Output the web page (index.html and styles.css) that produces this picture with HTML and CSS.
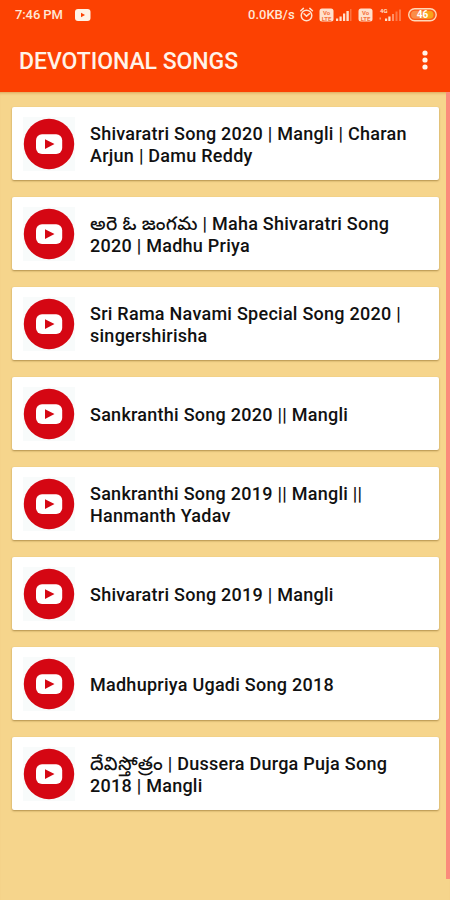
FILE: index.html
```html
<!DOCTYPE html>
<html lang="en">
<head>
    <meta charset="UTF-8">
    <meta name="viewport" content="width=device-width, initial-scale=1.0">
    <title>Devotional Songs</title>
    <link rel="stylesheet" href="styles.css">
</head>
<body>
    <svg class="defs" width="0" height="0">
        <symbol id="play" viewBox="0 0 52 54">
            <rect width="52" height="54" fill="#f8fbfb"/>
            <circle cx="26" cy="27" r="25.2" fill="#d50713"/>
            <rect x="13" y="17.3" width="26.2" height="19.7" rx="6" fill="#fff"/>
            <path d="M22 22.2v9.8l9.5-4.9z" fill="#d50713"/>
        </symbol>
    </svg>
    <header>
        <div class="status-bar">
            <span class="time">7:46 PM</span>
            <svg class="yt" width="16" height="12" viewBox="0 0 16 12">
                <rect width="15.5" height="12" rx="3" fill="#fff3e6"/>
                <path d="M6 3.8v4.4l4-2.2z" fill="#fc4102"/>
            </svg>
            <span class="speed">0.0KB/s</span>
            <svg class="status-icons" width="140" height="20" viewBox="0 0 140 20">
                <g fill="none" stroke="#ffe0cc" stroke-width="1.5" stroke-linecap="round">
                    <circle cx="6.5" cy="10.5" r="5.3"/>
                    <path d="M.8 5.8l2.6-2.4M12.4 5.8L9.8 3.4M4 8.7l2.5 2.5 3-2.5"/>
                </g>
                <g fill="#ffe0cc">
                    <rect x="19.5" y="3.5" width="14" height="13" rx="2.5"/>
                    <rect x="36" y="13.5" width="2.2" height="2.5"/>
                    <rect x="39.5" y="11.5" width="2.2" height="4.5"/>
                    <rect x="43" y="8.5" width="2.2" height="7.5"/>
                    <rect x="46.4" y="6" width="2.4" height="10"/>
                    <rect x="50" y="4" width="1.5" height="12" opacity=".3"/>
                    <rect x="58.5" y="3.5" width="14" height="13" rx="2.5"/>
                    <rect x="79.5" y="12.5" width="1.5" height="2" opacity=".5"/>
                    <rect x="85" y="13.5" width="2.2" height="2.5"/>
                    <rect x="88.3" y="11.5" width="2.2" height="4.5"/>
                    <rect x="92" y="9" width="2" height="7" opacity=".5"/>
                    <rect x="95.5" y="6.5" width="2" height="9.5" opacity=".35"/>
                    <rect x="99" y="4.5" width="2" height="11.5" opacity=".35"/>
                </g>
                <g class="volte">
                    <text x="26.5" y="9.5">Vo</text>
                    <text x="26.5" y="15.5">LTE</text>
                    <text x="65.5" y="9.5">Vo</text>
                    <text x="65.5" y="15.5">LTE</text>
                </g>
                <text class="net" x="80" y="8">4G</text>
                <rect x="108.7" y="3.7" width="27.5" height="12" rx="6" fill="#fc5a18" stroke="#ffd8b8" stroke-width="1.4"/>
                <path d="M111 9.7a4 4 0 0 1 4-4h8v8h-8a4 4 0 0 1-4-4z" fill="#f98d49"/>
                <path d="M123 5.7h6.5a4 4 0 0 1 0 8H123z" fill="#f9a31b"/>
                <text class="level" x="122.5" y="13.3">46</text>
            </svg>
        </div>
        <div class="toolbar">
            <h1>DEVOTIONAL SONGS</h1>
            <svg width="8" height="20" viewBox="0 0 8 20" fill="#fff3e9">
                <circle cx="4" cy="3" r="2.6"/>
                <circle cx="4" cy="10" r="2.6"/>
                <circle cx="4" cy="17" r="2.6"/>
            </svg>
        </div>
    </header>
    <main>
        <ul class="songs">
            <li class="song">
                <svg class="thumb"><use href="#play"/></svg>
                <p>Shivaratri Song 2020 | Mangli | Charan<br>Arjun | Damu Reddy</p>
            </li>
            <li class="song">
                <svg class="thumb"><use href="#play"/></svg>
                <p><span class="te" lang="te">అరె ఓ జంగమ</span> | Maha Shivaratri Song<br>2020 | Madhu Priya</p>
            </li>
            <li class="song">
                <svg class="thumb"><use href="#play"/></svg>
                <p>Sri Rama Navami Special Song 2020 |<br>singershirisha</p>
            </li>
            <li class="song">
                <svg class="thumb"><use href="#play"/></svg>
                <p>Sankranthi Song 2020 || Mangli</p>
            </li>
            <li class="song">
                <svg class="thumb"><use href="#play"/></svg>
                <p>Sankranthi Song 2019 || Mangli ||<br>Hanmanth Yadav</p>
            </li>
            <li class="song">
                <svg class="thumb"><use href="#play"/></svg>
                <p>Shivaratri Song 2019 | Mangli</p>
            </li>
            <li class="song">
                <svg class="thumb"><use href="#play"/></svg>
                <p>Madhupriya Ugadi Song 2018</p>
            </li>
            <li class="song">
                <svg class="thumb"><use href="#play"/></svg>
                <p><span class="te" lang="te">దేవిస్తోత్రం</span> | Dussera Durga Puja Song<br>2018 | Mangli</p>
            </li>
        </ul>
        <div class="scrollbar"></div>
    </main>
</body>
</html>
```
FILE: styles.css
```css
* {
    box-sizing: border-box;
}

body {
    margin: 0;
    height: 900px;
    overflow: hidden;
    display: flex;
    flex-direction: column;
    font-family: Roboto, "Noto Sans Telugu", "Noto Sans", sans-serif;
    background-color: #f6d58c;
}

.defs {
    position: absolute;
}

header {
    height: 92px;
    background-color: #fc4102;
    color: #fff3e9;
}

.status-bar {
    display: flex;
    align-items: center;
    height: 29px;
    padding-left: 15px;
    font-weight: 500;
    color: #ffe6d6;
}

.time {
    width: 60px;
    font-size: 14px;
    letter-spacing: -0.1px;
    white-space: nowrap;
}

.time,
.speed {
    font-size: 13px;
}

.speed {
    width: 52px;
    margin-left: 157px;
    white-space: nowrap;
}

.volte {
    font-size: 6px;
    font-weight: 700;
    text-anchor: middle;
    fill: #f4713c;
}

.net {
    font-size: 6px;
    font-weight: 700;
    fill: #ffe0cc;
}

.level {
    font-size: 10px;
    font-weight: 700;
    text-anchor: middle;
    fill: #fff;
}

.toolbar {
    display: flex;
    align-items: center;
    justify-content: space-between;
    height: 63px;
    padding: 0 21px 1px 19px;
}

h1 {
    margin: 2px 0 0;
    font-size: 23px;
    font-weight: 500;
    letter-spacing: -0.06px;
    white-space: nowrap;
}

main {
    flex: 1;
    display: flex;
    box-shadow: inset 0 3px 3px -2px #dca258;
}

.songs {
    flex: 1;
    display: flex;
    flex-direction: column;
    gap: 17px;
    margin: 0;
    padding: 15px 7px 0 12px;
    list-style: none;
}

.song {
    display: flex;
    align-items: center;
    height: 73px;
    padding-left: 11px;
    background-color: #fff;
    border-radius: 2px;
    box-shadow: 0 1px 2px rgba(120, 85, 20, 0.55);
}

.thumb {
    flex: none;
    width: 52px;
    height: 54px;
}

.song p {
    margin: 2px 0 0 15px;
    font-size: 18px;
    font-weight: 500;
    line-height: 22px;
    letter-spacing: 0.26px;
    color: #111;
    white-space: nowrap;
}

.te {
    display: inline-block;
    height: 22px;
    font-size: 18.8px;
    vertical-align: top;
}

.scrollbar {
    width: 4px;
    height: 787px;
    background-color: #fb8a7c;
}
```
